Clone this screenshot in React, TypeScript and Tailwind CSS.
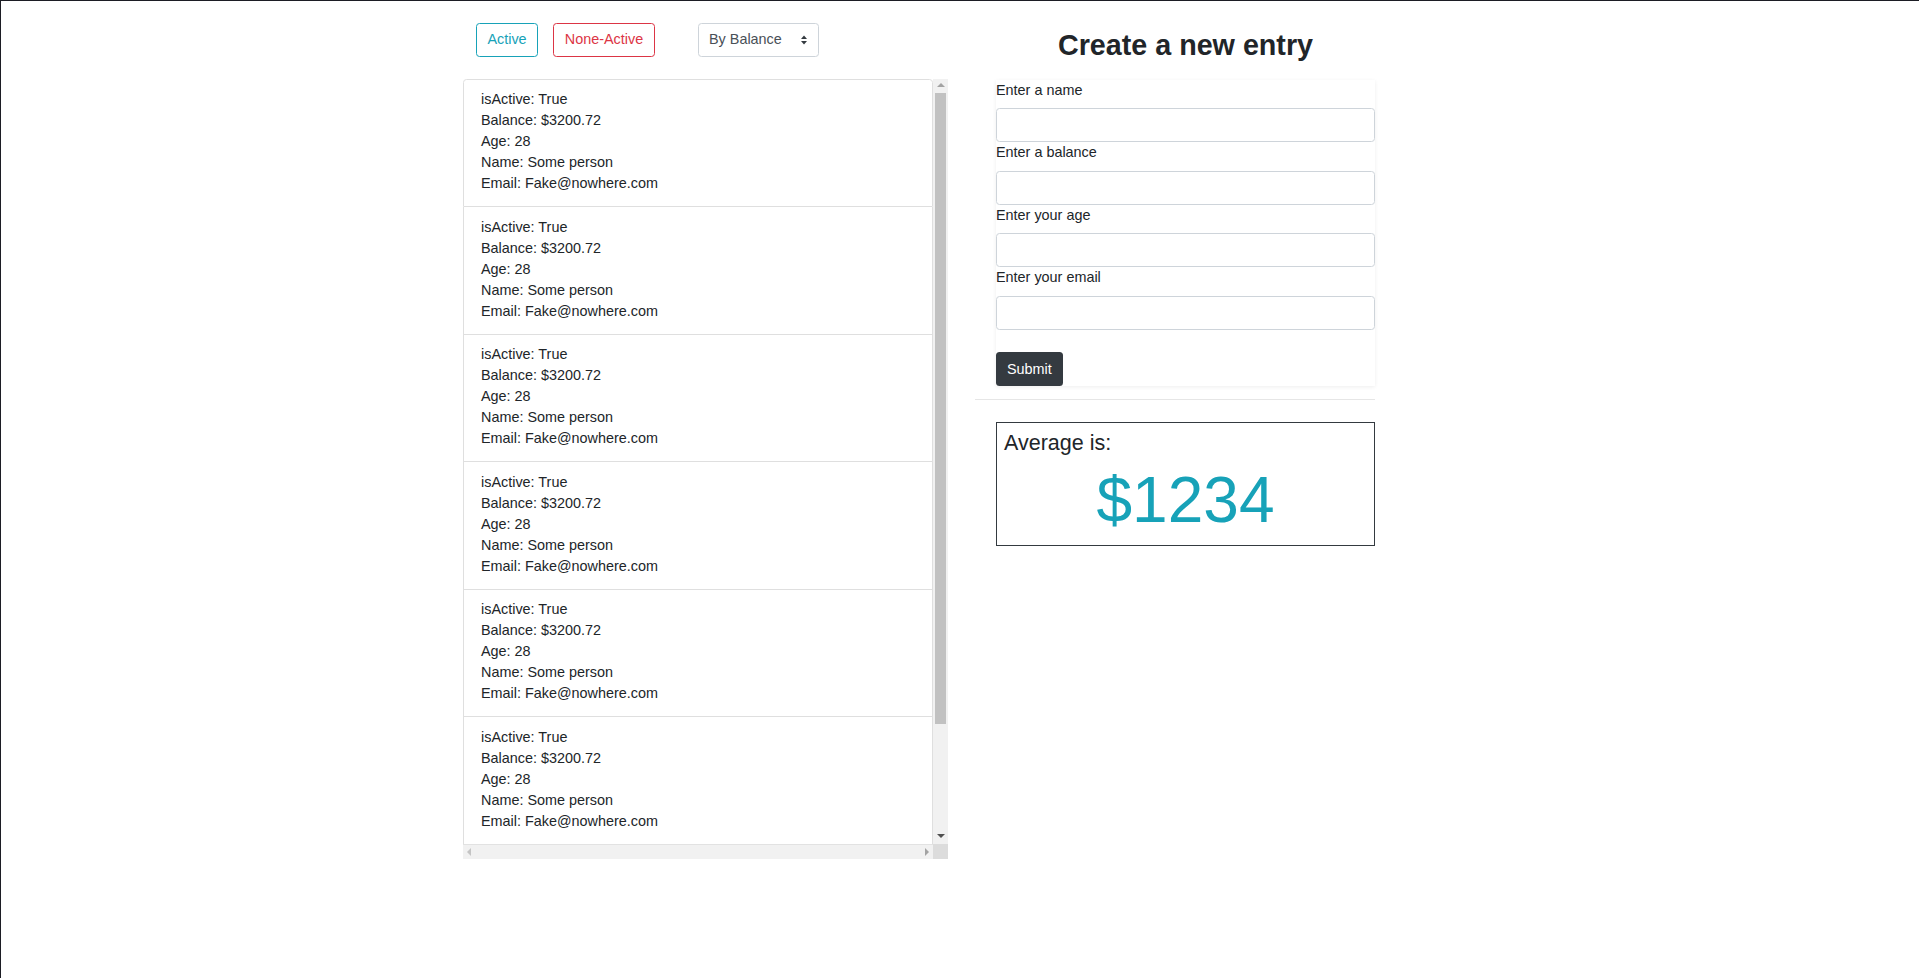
import React from 'react';

type Entry = {
  isActive: boolean;
  balance: string;
  age: number;
  name: string;
  email: string;
};

const entries: Entry[] = Array.from({ length: 6 }, () => ({
  isActive: true,
  balance: '$3200.72',
  age: 28,
  name: 'Some person',
  email: 'Fake@nowhere.com',
}));

const fields = ['Enter a name', 'Enter a balance', 'Enter your age', 'Enter your email'];

function SortArrows() {
  return (
    <svg width="8" height="12" viewBox="0 0 8 12" className="pointer-events-none absolute right-[11px] top-1/2 -translate-y-1/2">
      <path d="M4 1.5 L7 5 L1 5 Z" fill="#343a40" />
      <path d="M4 10.5 L7 7 L1 7 Z" fill="#343a40" />
    </svg>
  );
}

// small triangle used by the fake scrollbar buttons
function Tri({ dir, color }: { dir: 'up' | 'down' | 'left' | 'right'; color: string }) {
  const d = {
    up: 'M4 1 L8 5 L0 5 Z',
    down: 'M4 7 L8 3 L0 3 Z',
    left: 'M1 4 L5 0 L5 8 Z',
    right: 'M7 4 L3 0 L3 8 Z',
  }[dir];
  return (
    <svg width="8" height="8" viewBox="0 0 8 8">
      <path d={d} fill={color} />
    </svg>
  );
}

function EntryList() {
  return (
    <div className="mt-[22px] grid h-[780px] w-[485px] grid-cols-[470px_15px] grid-rows-[765px_15px]">
      <ul className="flex flex-col overflow-hidden">
        {entries.map((e, i) => (
          <li
            key={i}
            className={`shrink-0 border-x border-b border-[#dfdfdf] px-[17px] pb-[12px] pt-[9.5px] text-[14.4px] leading-[21px] text-[#212529] ${
              i === 0 ? 'rounded-t-[3.5px] border-t' : ''
            }`}
          >
            <div>isActive: {e.isActive ? 'True' : 'False'}</div>
            <div>Balance: {e.balance}</div>
            <div>Age: {e.age}</div>
            <div>Name: {e.name}</div>
            <div>Email: {e.email}</div>
          </li>
        ))}
      </ul>

      <div className="flex flex-col items-center bg-[#f1f1f1]">
        <div className="flex h-[14px] items-center justify-center">
          <Tri dir="up" color="#a3a3a3" />
        </div>
        <div className="h-[631px] w-[11px] bg-[#c1c1c1]" />
        <div className="flex-1" />
        <div className="mb-[2px] flex h-[14px] items-center justify-center">
          <Tri dir="down" color="#505050" />
        </div>
      </div>

      <div className="flex items-center justify-between border-t border-[#e2e2e2] bg-[#f1f1f1] px-[3px]">
        <Tri dir="left" color="#c4c4c4" />
        <Tri dir="right" color="#a3a3a3" />
      </div>
      <div className="bg-[#dcdcdc]" />
    </div>
  );
}

function EntryForm() {
  return (
    <form className="bg-white shadow-[0_1px_4px_rgba(0,0,0,0.07)]" onSubmit={(e) => e.preventDefault()}>
      {fields.map((label) => (
        <div key={label}>
          <label className="mb-[7.4px] block text-[14.4px] leading-[21px] text-[#212529]">{label}</label>
          <input
            type="text"
            className="block h-[34px] w-full rounded-[3.5px] border border-[#ced4da] bg-white px-[11px] text-[14.4px] outline-none"
          />
        </div>
      ))}
      <button
        type="submit"
        className="mt-[22.5px] block h-[34px] rounded-[3.5px] bg-[#343a40] px-[11px] text-[14.4px] leading-[21px] text-white"
      >
        Submit
      </button>
    </form>
  );
}

export default function App() {
  return (
    <div className="min-h-screen border-l border-t border-[#1c1d24] bg-white font-['Liberation_Sans',Arial,sans-serif]">
      <div className="flex pl-[462px]">
        <div className="w-[485px]">
          <div className="mt-[22px] flex items-center pl-[13px]">
            <button className="h-[33.5px] w-[62px] rounded-[3.5px] border border-[#17a2b8] text-[14.4px] leading-[21px] text-[#17a2b8]">
              Active
            </button>
            <button className="ml-[15px] h-[33.5px] w-[102px] rounded-[3.5px] border border-[#dc3545] text-[14.4px] leading-[21px] text-[#dc3545]">
              None-Active
            </button>
            <div className="relative ml-[43px]">
              <select className="h-[33.5px] w-[121px] appearance-none rounded-[3.5px] border border-[#ced4da] bg-white pl-[10px] text-[14.4px] leading-[21px] text-[#495057] outline-none">
                <option>By Balance</option>
                <option>By Age</option>
                <option>By Name</option>
              </select>
              <SortArrows />
            </div>
          </div>
          <EntryList />
        </div>

        <div className="ml-[27px] w-[400px]">
          <div className="pl-[21px]">
            <h2 className="mt-[27px] text-center text-[28.7px] font-bold leading-[34px] text-[#212529]">
              Create a new entry
            </h2>
            <div className="mt-[18px]">
              <EntryForm />
            </div>
          </div>
          <hr className="mt-[13px] border-t border-[#e6e6e6]" />
          <div className="ml-[21px] mt-[22px] h-[124px] border border-[#343a40] px-[7px] pt-[7px]">
            <div className="text-[21.5px] leading-[26px] text-[#212529]">Average is:</div>
            <div className="mt-[8px] text-center text-[64px] leading-[73px] text-[#17a2b8]">$1234</div>
          </div>
        </div>
      </div>
    </div>
  );
}
